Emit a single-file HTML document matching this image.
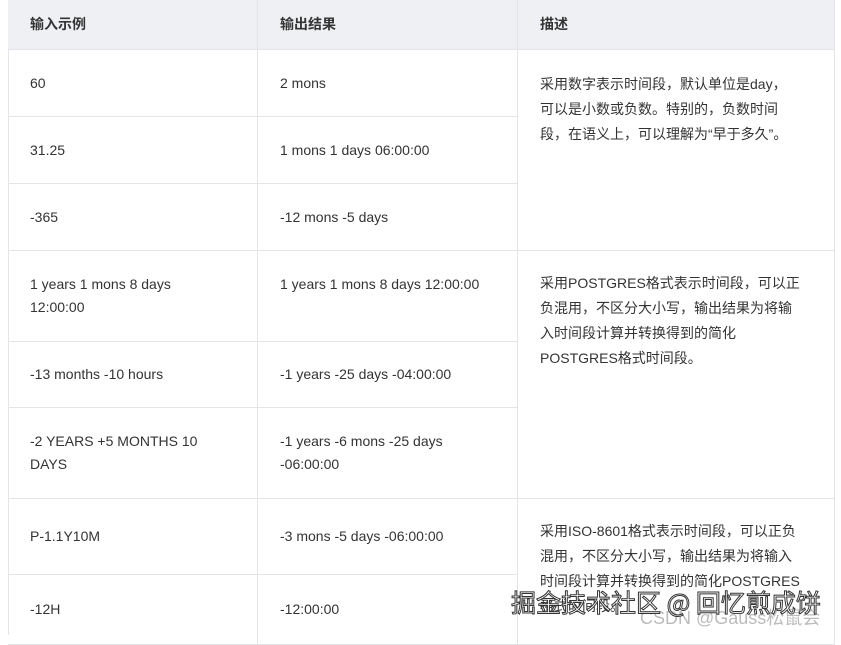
<!DOCTYPE html>
<html><head><meta charset="utf-8"><style>
html,body{margin:0;width:841px;height:635px;overflow:hidden;background:#fff;font-family:"Liberation Sans","Noto Sans CJK SC",sans-serif;color:#333;font-size:14px}
.c{position:absolute;box-sizing:border-box;border-right:1px solid #e3e5e8;border-bottom:1px solid #e3e5e8;padding-left:22px;display:flex;align-items:center;line-height:23px}
.h{background:#eef0f4;font-weight:bold;font-size:14px}
.d{padding:0 34px 0 22px;font-size:14px;line-height:25px}
.wm{position:absolute;left:511px;top:584px;font-size:25px;color:#fff;-webkit-text-stroke:1px #333;font-family:"Noto Sans CJK SC",sans-serif;letter-spacing:0;white-space:nowrap}
.cs{position:absolute;left:640px;top:604px;font-size:18px;color:#bbb;white-space:nowrap}
</style></head><body>
<div style="position:absolute;left:8px;top:0;width:1px;height:635px;background:#e3e5e8"></div>
<div class="c h" style="left:8px;top:0;width:250px;height:50px">输入示例</div>
<div class="c h" style="left:258px;top:0;width:260px;height:50px">输出结果</div>
<div class="c h" style="left:518px;top:0;width:317px;height:50px">描述</div>

<div class="c" style="left:8px;top:50px;width:250px;height:67px">60</div>
<div class="c" style="left:258px;top:50px;width:260px;height:67px">2 mons</div>
<div class="c" style="left:8px;top:117px;width:250px;height:67px">31.25</div>
<div class="c" style="left:258px;top:117px;width:260px;height:67px">1 mons 1 days 06:00:00</div>
<div class="c" style="left:8px;top:184px;width:250px;height:67px">-365</div>
<div class="c" style="left:258px;top:184px;width:260px;height:67px">-12 mons -5 days</div>
<div class="c d" style="left:518px;top:50px;width:317px;height:201px;align-items:flex-start;padding-top:22px">采用数字表示时间段，默认单位是day，可以是小数或负数。特别的，负数时间段，在语义上，可以理解为“早于多久”。</div>

<div class="c" style="left:8px;top:251px;width:250px;height:91px">1 years 1 mons 8 days<br>12:00:00</div>
<div class="c" style="left:258px;top:251px;width:260px;height:91px;align-items:flex-start;padding-top:22px">1 years 1 mons 8 days 12:00:00</div>
<div class="c" style="left:8px;top:342px;width:250px;height:66px">-13 months -10 hours</div>
<div class="c" style="left:258px;top:342px;width:260px;height:66px">-1 years -25 days -04:00:00</div>
<div class="c" style="left:8px;top:408px;width:250px;height:91px">-2 YEARS +5 MONTHS 10<br>DAYS</div>
<div class="c" style="left:258px;top:408px;width:260px;height:91px">-1 years -6 mons -25 days<br>-06:00:00</div>
<div class="c d" style="left:518px;top:251px;width:317px;height:248px;align-items:flex-start;padding-top:20px">采用POSTGRES格式表示时间段，可以正负混用，不区分大小写，输出结果为将输入时间段计算并转换得到的简化POSTGRES格式时间段。</div>

<div class="c" style="left:8px;top:499px;width:250px;height:76px">P-1.1Y10M</div>
<div class="c" style="left:258px;top:499px;width:260px;height:76px">-3 mons -5 days -06:00:00</div>
<div class="c" style="left:8px;top:575px;width:250px;height:70px">-12H</div>
<div class="c" style="left:258px;top:575px;width:260px;height:70px">-12:00:00</div>
<div class="c d" style="left:518px;top:499px;width:317px;height:146px;align-items:flex-start;padding-top:20px;padding-right:20px">采用ISO-8601格式表示时间段，可以正负<br>混用，不区分大小写，输出结果为将输入<br>时间段计算并转换得到的简化POSTGRES<br>格式时间段。</div>

<div class="cs">CSDN @Gauss松鼠会</div>
<div class="wm">掘金技术社区 @ 回忆煎成饼</div>
</body></html>
